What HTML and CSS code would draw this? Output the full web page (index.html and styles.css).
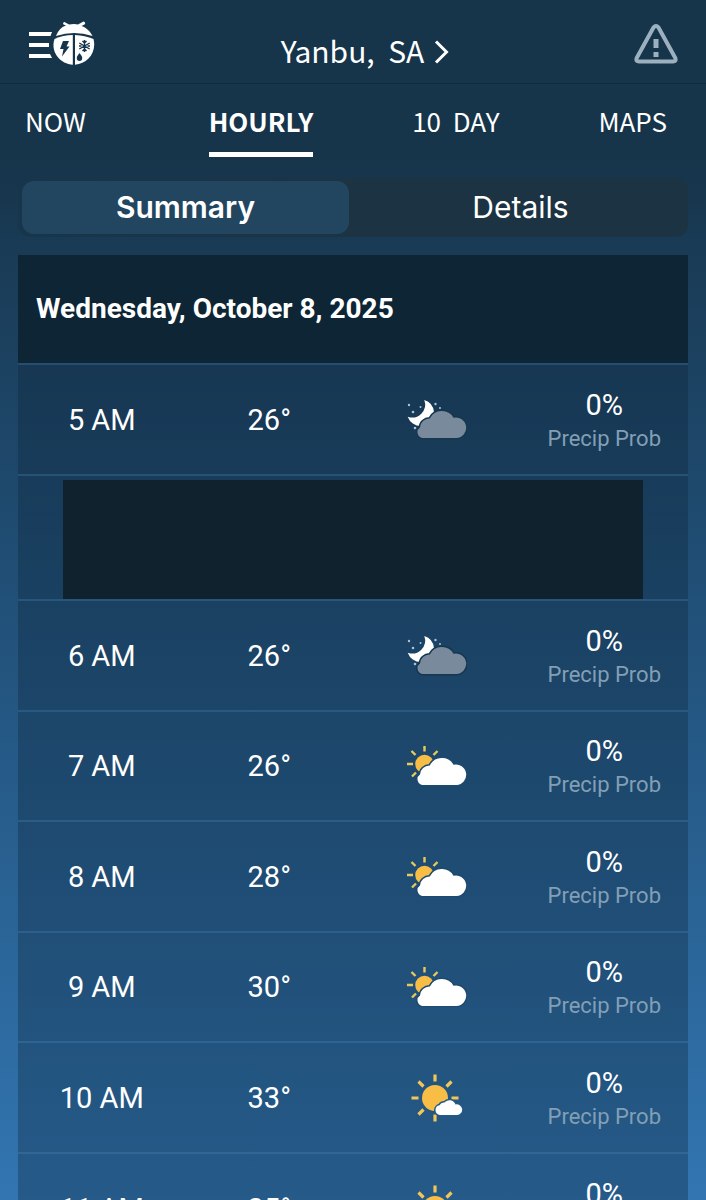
FILE: index.html
```html
<!DOCTYPE html>
<html lang="en">
<head>
    <meta charset="UTF-8">
    <meta name="viewport" content="width=device-width, initial-scale=1">
    <title>Hourly Forecast</title>
    <link rel="stylesheet" href="styles.css">
</head>
<body>

<!-- Shared icons -->
<svg class="sprite" aria-hidden="true">
    <symbol id="night-cloudy" viewBox="0 1 60 40">
        <path fill="#fff" d="M17.300 1 A14 14 0 0 1 27 13 A14.500 14.500 0 0 1 14 27 A14 14 0 0 1 0.700 17.700 A13 13 0 0 0 17.300 1 Z"/>
        <g fill="#a9c3d4">
            <circle cx="2" cy="6" r="1.200"/>
            <circle cx="6" cy="13" r="1.300"/>
            <circle cx="13.500" cy="8" r="1"/>
            <circle cx="28.500" cy="5" r="1.200"/>
            <circle cx="33" cy="9" r="1"/>
            <circle cx="8" cy="29" r="1.300"/>
        </g>
        <path fill="#788a9b" stroke="#16374f" stroke-width="3" paint-order="stroke" d="M15.500 39 A5.800 5.800 0 0 1 13 28.500 A9.500 9.500 0 0 1 22.800 19.500 A13.500 13.500 0 0 1 46.500 18.700 A10.300 10.300 0 1 1 49.500 39 Z"/>
    </symbol>
    <symbol id="partly-sunny" viewBox="0 0 60 40">
        <g stroke="#e8c95c" stroke-width="2.400">
            <path d="M17.500 0v5.500M4.500 5l4 4M30.500 5l-4 4M0 18h6M5 30.500l4-4"/>
        </g>
        <circle cx="17.500" cy="18" r="9.300" fill="#f7bd45"/>
        <path fill="#fff" stroke="#1e4a6f" stroke-width="3" paint-order="stroke" d="M15.500 39 A5.800 5.800 0 0 1 13 28.500 A9.500 9.500 0 0 1 22.800 19.500 A13.500 13.500 0 0 1 46.500 18.700 A10.300 10.300 0 1 1 49.500 39 Z"/>
    </symbol>
    <symbol id="mostly-sunny" viewBox="0 0 52 48">
        <g stroke="#f2c558" stroke-width="3.200">
            <path d="M24 0.500v7M7.500 7.500l5 5M40.500 7.500l-5 5M0.500 24h7M40.500 24h7M7.500 40.500l5-5M24 40.500v7"/>
        </g>
        <circle cx="24" cy="24" r="13" fill="#f7bd45"/>
        <path fill="#fff" stroke="#255a87" stroke-width="3" paint-order="stroke" d="M29 41 A4.900 4.900 0 0 1 28.500 31.300 A5 5 0 0 1 33.500 28.500 A6.500 6.500 0 0 1 44.500 30.500 A5.300 5.300 0 1 1 47 41 Z"/>
    </symbol>
</svg>

<div class="app">
    <header class="topbar">
        <button type="button" class="menu" aria-label="Menu">
            <svg width="68" height="46" viewBox="0 0 68 46">
                <g fill="#fff">
                    <path d="M1 11h23l-1.500 4H1zM1 22h20v4H1zM1 33h21l2 4H1z"/>
                    <path d="M28 15 C30 10 33 6 38 4.500 L35.500 3.500 A1.500 1.500 0 0 1 36.500 1 L41 3.500 C44 2.800 48 2.800 50 3.500 L54.500 1 A1.500 1.500 0 0 1 56.500 3.500 L53.500 5 C59 7 62.500 11 64.500 15 Q46 9 28 15 Z"/>
                    <path d="M26.500 18 Q35 14 44.800 14 V43.800 C33 43 22 32 26.500 18 Z"/>
                    <path d="M47 14 Q57 14.500 65.500 18 C69 32 59 43 47 43.800 Z"/>
                </g>
                <g fill="#16344a">
                    <path d="M35 20h6l-2.500 5.500h3L34 35.500l1.500-7.500h-3.500z"/>
                    <path d="M51.500 32 Q54.500 35.500 54.200 37.300 A2.700 2.700 0 0 1 48.800 37.300 Q48.500 35.500 51.500 32z"/>
                </g>
                <path stroke="#16344a" stroke-width="1.400" fill="none" d="M56.500 19v12M51.300 22l10.400 6M51.300 28l10.400-6M54.500 20l2 2 2-2M54.500 30l2-2 2 2M51 25l2.500 0M59.500 25h2.500"/>
            </svg>
        </button>
        <button type="button" class="location">
            <span>Yanbu,&nbsp; SA</span>
            <svg width="15" height="24" viewBox="0 0 15 24"><path fill="none" stroke="#fff" stroke-width="3" d="M2 1.500 12.500 12 2 22.500"/></svg>
        </button>
        <button type="button" class="alerts" aria-label="Alerts">
            <svg width="44" height="40" viewBox="0 0 44 40">
                <path fill="none" stroke="#9cb0bf" stroke-width="4" stroke-linejoin="round" d="M19.500 3.500 2.700 34 Q1.500 37.500 5 37.500 H39 Q42.500 37.500 41.300 34 L24.500 3.500 Q22 0.500 19.500 3.500Z"/>
                <path fill="#9cb0bf" d="M19.500 15h5v9h-5zM19.500 28h5v5h-5z"/>
            </svg>
        </button>
    </header>

    <nav class="tabs">
        <a href="#now" class="tab tab-now">NOW</a>
        <a href="#hourly" class="tab active" aria-current="page">HOURLY</a>
        <a href="#ten-day" class="tab">10&nbsp; DAY</a>
        <a href="#maps" class="tab">MAPS</a>
    </nav>

    <div class="segmented">
        <button type="button" class="segment selected" aria-pressed="true">Summary</button>
        <button type="button" class="segment" aria-pressed="false">Details</button>
    </div>

    <main class="forecast">
        <h2 class="date">Wednesday, October 8, 2025</h2>
        <table class="hours">
            <tbody>
                <tr>
                    <td>5 AM</td>
                    <td>26°</td>
                    <td><svg class="icon"><use href="#night-cloudy"/></svg></td>
                    <td class="precip">0%<small>Precip Prob</small></td>
                </tr>
                <tr class="ad-row">
                    <td colspan="4"><div class="ad"></div></td>
                </tr>
                <tr>
                    <td>6 AM</td>
                    <td>26°</td>
                    <td><svg class="icon"><use href="#night-cloudy"/></svg></td>
                    <td class="precip">0%<small>Precip Prob</small></td>
                </tr>
                <tr>
                    <td>7 AM</td>
                    <td>26°</td>
                    <td><svg class="icon"><use href="#partly-sunny"/></svg></td>
                    <td class="precip">0%<small>Precip Prob</small></td>
                </tr>
                <tr>
                    <td>8 AM</td>
                    <td>28°</td>
                    <td><svg class="icon"><use href="#partly-sunny"/></svg></td>
                    <td class="precip">0%<small>Precip Prob</small></td>
                </tr>
                <tr>
                    <td>9 AM</td>
                    <td>30°</td>
                    <td><svg class="icon"><use href="#partly-sunny"/></svg></td>
                    <td class="precip">0%<small>Precip Prob</small></td>
                </tr>
                <tr>
                    <td>10 AM</td>
                    <td>33°</td>
                    <td><svg class="icon icon-sun"><use href="#mostly-sunny"/></svg></td>
                    <td class="precip">0%<small>Precip Prob</small></td>
                </tr>
                <tr>
                    <td>11 AM</td>
                    <td>35°</td>
                    <td><svg class="icon icon-sun"><use href="#mostly-sunny"/></svg></td>
                    <td class="precip">0%<small>Precip Prob</small></td>
                </tr>
            </tbody>
        </table>
    </main>
</div>

</body>
</html>
```
FILE: styles.css
```css
* {
    box-sizing: border-box;
}
body {
    margin: 0;
    color: #fff;
    font-family: Roboto, sans-serif;
}
button {
    padding: 0;
    border: 0;
    background: none;
    color: inherit;
    cursor: pointer;
}
svg {
    display: block;
}
.sprite {
    display: none;
}
.app {
    display: flex;
    flex-direction: column;
    height: 100vh;
    overflow: hidden;
    background: linear-gradient(#16344a 0%, #16344a 13%, #1a3c57 22%, #1f4c72 45%, #3275b1 100%);
}

/* Header */
.topbar {
    display: flex;
    justify-content: space-between;
    align-items: center;
    height: 84px;
    padding: 4px 28px 0;
    border-bottom: 1px solid #112b3d;
    flex-shrink: 0;
}
.location {
    display: flex;
    align-items: center;
    gap: 10px;
    padding-top: 12px;
    font-family: "Noto Sans CJK SC", sans-serif;
    font-size: 30px;
    line-height: 40px;
}
.location svg {
    margin-top: 4px;
}

/* Tabs */
.tabs {
    display: flex;
    justify-content: space-between;
    padding: 19px 39px 0 25px;
    flex-shrink: 0;
}
.tab {
    height: 54px;
    color: #fff;
    font-family: "Noto Sans CJK SC", sans-serif;
    font-size: 26px;
    line-height: 36px;
    text-decoration: none;
}
.tab-now {
    padding-right: 24px;
}
.tab.active {
    border-bottom: 5px solid #fff;
    font-weight: 700;
}

/* Summary / Details switch */
.segmented {
    display: grid;
    grid-template-columns: 1fr 1fr;
    gap: 8px;
    margin: 21px 18px 18px;
    padding: 3px 4px;
    border-radius: 12px;
    background: linear-gradient(90deg, #17364c, #1c3343 50%);
    flex-shrink: 0;
}
.segment {
    height: 53px;
    border-radius: 12px;
    font-family: Inter, sans-serif;
    font-size: 30px;
    line-height: 53px;
}
.segment.selected {
    background: #224560;
    font-weight: 600;
}

/* Hourly list */
.forecast {
    flex: 1;
    min-height: 0;
    margin: 0 18px;
    overflow: hidden;
    background: rgba(13, 35, 52, 0.32);
}
.date {
    height: 108px;
    margin: 0;
    padding: 0 18px;
    background: #0e2535;
    font-size: 28px;
    line-height: 108px;
}
.hours {
    width: 100%;
    table-layout: fixed;
    border-collapse: collapse;
    font-size: 29px;
    line-height: 34px;
    text-align: center;
}
.hours tr {
    height: 111px;
    border-top: 2px solid rgba(80, 150, 205, 0.25);
}
.hours tr:nth-child(even) {
    height: 110px;
}
.hours td {
    padding: 0;
}
.hours .precip {
    padding-top: 4px;
}
.hours small {
    display: block;
    color: #829fb5;
    font-size: 22px;
}
.hours tr.ad-row {
    height: 125px;
}
.hours .ad-row td {
    padding: 4px 45px 0;
}
.ad {
    height: 119px;
    background: #10222e;
}
.icon {
    width: 60px;
    height: 40px;
    margin: 0 auto;
}
.icon-sun {
    width: 52px;
    height: 48px;
}
```
